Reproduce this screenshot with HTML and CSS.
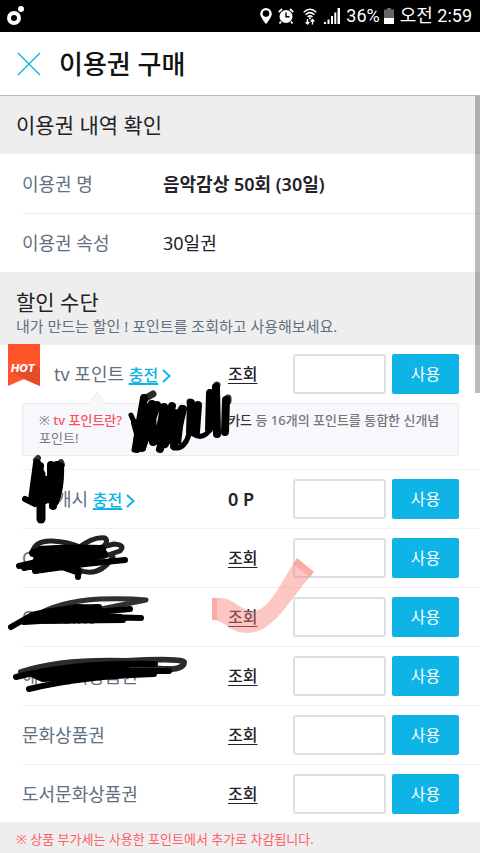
FILE: index.html
```html
<!DOCTYPE html>
<html lang="ko">
<head>
<meta charset="utf-8">
<meta name="viewport" content="width=device-width, initial-scale=1">
<title>이용권 구매</title>
<link rel="stylesheet" href="styles.css">
</head>
<body>
<div class="app">
  <div class="status">
    <svg class="status-logo" width="18" height="20" viewBox="0 0 18 20"><circle cx="7" cy="12" r="5" fill="none" stroke="#fff" stroke-width="4"/><circle cx="14" cy="3" r="3" fill="#fff"/></svg>
    <svg width="12" height="16" viewBox="0 0 12 16"><path fill="#fff" fill-rule="evenodd" d="M6 0a5.800 5.800 0 0 0-5.800 5.800C.2 9.500 6 16 6 16s5.800-6.500 5.800-10.200A5.800 5.800 0 0 0 6 0zm0 2.300a3.300 3.300 0 1 1 0 6.600 3.300 3.300 0 0 1 0-6.600z"/></svg>
    <svg class="alarm" width="16" height="16" viewBox="0 0 16 16"><circle cx="8" cy="8.500" r="6.500" fill="#fff"/><path d="M.8 4.200 4 1M15.200 4.200 12 1M3 13.500 1.500 15.500M13 13.500l1.500 2" stroke="#fff" stroke-width="1.800"/><path d="M8 4.500v4.300h3.500" fill="none" stroke="#000" stroke-width="1.400"/></svg>
    <svg class="wifi" width="14" height="17" viewBox="0 0 14 17"><path d="M.7 4.200Q7-1.800 13.300 4.200M2.600 6.600Q7 2.600 11.400 6.600M4.500 9Q7 6.800 9.500 9" fill="none" stroke="#fff" stroke-width="1.500"/><circle cx="7" cy="10.300" r="1.100" fill="#fff"/><path d="M4.500 11v5M2.700 14l1.800 2 1.800-2M9.500 16.500v-5M7.700 13.500l1.800-2 1.800 2" fill="none" stroke="#fff" stroke-width="1.300"/></svg>
    <svg class="signal" width="16" height="16" viewBox="0 0 16 16"><path fill="#fff" d="M0 14h2v2H0zM3.500 11.500h2V16h-2zM7 8h2v8H7zM10.300 4.500h2V16h-2zM13.500 0H16v16h-2.500z"/></svg>
    <span class="percent">36%</span>
    <svg class="battery" width="10" height="16" viewBox="0 0 10 16"><path fill="#666" d="M3 0h4v1.500h3V10H0V1.500h3z"/><path fill="#fff" d="M0 10h10v6H0z"/></svg>
    <span class="time">오전 2:59</span>
  </div>

  <header class="topbar">
    <button class="close" type="button" aria-label="닫기"><svg width="24" height="24" viewBox="0 0 24 24"><path d="M1 1l22 22M23 1 1 23" stroke="#0fb4e7" stroke-width="1.400"/></svg></button>
    <h1>이용권 구매</h1>
  </header>

  <main>
    <h2 class="section">이용권 내역 확인</h2>
    <dl class="info">
      <div class="info-row"><dt>이용권 명</dt><dd class="strong">음악감상 50회 (30일)</dd></div>
      <div class="info-row"><dt>이용권 속성</dt><dd>30일권</dd></div>
    </dl>

    <div class="section discount">
      <h2>할인 수단</h2>
      <p>내가 만드는 할인 ! 포인트를 조회하고 사용해보세요.</p>
    </div>

    <div class="methods">
      <div class="group">
        <svg class="hot" width="34" height="44" viewBox="0 0 34 44"><path fill="#ff552b" d="M1 0h32v42l-16-7-16 7z"/><path fill="#e44b27" d="M28 20l5 5v17l-16-7-11-7z"/><text x="16" y="28" text-anchor="middle">HOT</text></svg>
        <div class="row">
          <label class="name indent" for="p1">tv 포인트 <a href="#charge">충전<svg width="9" height="14" viewBox="0 0 9 14"><path d="M1 1l6.500 6L1 13" fill="none" stroke="#0fb4e7" stroke-width="2"/></svg></a></label>
          <a class="check" href="#check">조회</a><input id="p1" type="text"><button class="use" type="button">사용</button>
        </div>
        <div class="tip">
          <svg class="arrow" width="16" height="13" viewBox="0 0 16 13"><path d="M0 13 8 1l8 12" fill="#f7f8fc" stroke="#e9ebf1"/></svg>
          ※ <b class="red">tv 포인트란?</b><span class="blank"></span><b class="dark">카드</b> <b>등 16개의 포인트를 통합한 신개념</b> 포인트!
        </div>
      </div>
      <div class="row">
        <label class="name hidden-start" for="p2">캐시 <a href="#charge">충전<svg width="9" height="14" viewBox="0 0 9 14"><path d="M1 1l6.500 6L1 13" fill="none" stroke="#0fb4e7" stroke-width="2"/></svg></a></label>
        <strong class="points">0 P</strong><input id="p2" type="text"><button class="use" type="button">사용</button>
      </div>
      <div class="row">
        <label class="name" for="p3">O</label>
        <a class="check" href="#check">조회</a><input id="p3" type="text"><button class="use" type="button">사용</button>
      </div>
      <div class="row">
        <label class="name split" for="p4"><span>O</span><span>Point</span></label>
        <a class="check" href="#check">조회</a><input id="p4" type="text"><button class="use" type="button">사용</button>
      </div>
      <div class="row">
        <label class="name" for="p5">해피머니상품권</label>
        <a class="check" href="#check">조회</a><input id="p5" type="text"><button class="use" type="button">사용</button>
      </div>
      <div class="row">
        <label class="name" for="p6">문화상품권</label>
        <a class="check" href="#check">조회</a><input id="p6" type="text"><button class="use" type="button">사용</button>
      </div>
      <div class="row">
        <label class="name" for="p7">도서문화상품권</label>
        <a class="check" href="#check">조회</a><input id="p7" type="text"><button class="use" type="button">사용</button>
      </div>
    </div>
    <p class="notice">※ 상품 부가세는 사용한 포인트에서 추가로 차감됩니다.</p>
  </main>
  <div class="scrollbar"></div>

  <svg class="ink" width="480" height="853" viewBox="0 0 480 853">
    <path d="M141 405l12-3-3 40-10-6zM161 408l24 2-4 34-14 0zM38 546l40-2 26 10-5 11-58 5-9-8zM30 620l38-17 22 2-5 7 37 2-1 8-90 2zM24 674l30-8 76-4 22 4-30 6-30 8-50 2z"/>
    <g fill="none" stroke="#000" stroke-linecap="round" stroke-linejoin="round">
      <path stroke="#2b2b2b" stroke-width="7" d="M146 398l7-4M212 400l5-15M228 398l0 3M190 402l1 6"/>
      <path stroke-width="5" d="M131 415l6 14M140 416l-6 34"/>
      <path stroke-width="8" d="M144 398l-6 35-1 16M157 405l-15 43M135 423l7 25M152 404l1 38M164 407l-6 34M172 406l-12 43M182 409l-17 35M183 409l-9 37"/>
      <path stroke-width="5" d="M174 448q11 1 15-14M193 434q9 6 16-3"/>
      <path stroke-width="8" d="M191 403l-1 29M198 405l-2 27M210 393l-1 36M216 387l1 47M226 400l-1 32"/>
      <path stroke="#303030" stroke-width="6" d="M36 460l2-2M61 462l1 3"/>
      <path stroke-width="8" d="M37 463l-5 37M40 466l-4 34M51 465l0 35M57 465l-4 41M60 466q1 19-5 36M46 480l-1 20"/>
      <path stroke-width="9" d="M41 474l0 45"/>
      <path stroke-width="6" d="M25 499l10 5"/>
      <path stroke="#222" stroke-width="5" d="M32 553q3-13 20-12 17 1 28 6M78 548q16-12 27-10 6 5-10 15M91 550l23-6q12 1 6 7l-21 7M79 570q20 8 34-13"/>
      <path stroke-width="8" d="M33 553q22-6 69-4M38 562l66-8M37 569l50-9"/>
      <path stroke-width="6" d="M19 566l22-5M24 568l21-5M35 571l50-7 40-4M78 570v7M56 565l23 8"/>
      <path stroke="#303030" stroke-width="5" d="M32 618q25-17 68-19 27-1 46 1l-45 9"/>
      <path stroke-width="6" d="M11 627l21-12q33-8 67-8M28 618l102-9M24 622l81-5 36 1M30 621l93-1"/>
      <path stroke="#2b2b2b" stroke-width="6" d="M21 672q40-13 105-11 53-3 58 1 0 8-20 7l-32-2"/>
      <path stroke-width="6" d="M16 677q60-15 139-13M45 677l56-6 68 0M29 689q54-13 125-15"/>
    </g>
    <path fill="#f8827a" fill-opacity=".45" d="M212 598h8c14 0 21 13 33 13 15 0 23-20 44-53l17 14c-23 25-40 61-66 61-20 0-22-13-36-13z"/>
    <path fill="#f8827a" fill-opacity=".4" d="M212 598h5v22h-5zM297 558l17 14-4 5-17-13z"/>
  </svg>
</div>
</body>
</html>
```
FILE: styles.css
```css
* { box-sizing: border-box; }
body {
  margin: 0;
  background: #fff;
  color: #222228;
  font: 18px/26px "Noto Sans", "Noto Sans CJK KR", sans-serif;
}
h1, h2, p, dl, dd { margin: 0; font-weight: 400; }
button, input { font: inherit; }
.app { position: relative; overflow: hidden; }

.status {
  display: flex;
  align-items: center;
  height: 32px;
  padding: 0 8px 0 7px;
  background: #000;
  color: #fff;
  font-family: Roboto, "Noto Sans CJK KR", sans-serif;
}
.status-logo { margin-right: auto; }
.alarm { margin-left: 6px; }
.wifi { margin-left: 9px; }
.signal { margin-left: 7px; }
.percent { margin-left: 6px; }
.battery { margin: 0 6px 0 4px; }

.topbar {
  display: flex;
  align-items: center;
  gap: 18px;
  height: 64px;
  padding-left: 17px;
  border-bottom: 1px solid #b4bac2;
}
.close { display: flex; padding: 0; border: 0; background: none; }
.topbar h1 { font-size: 26px; line-height: 36px; font-weight: 500; color: #111; }

.section { padding: 14px 16px; background: #eee; font-size: 21px; line-height: 30px; }
.discount { padding: 16px 16px 9px; }
.discount h2 { font-size: 21px; line-height: 28px; }
.discount p { font-size: 15px; line-height: 20px; color: #607080; }

.info { padding-left: 22px; }
.info-row { display: flex; align-items: center; height: 59px; }
.info-row + .info-row { border-top: 1px solid #e8edf4; }
.info dt { width: 141px; color: #607080; }
.strong { font-weight: 600; }

.methods { padding-left: 22px; }
.group { position: relative; padding-bottom: 13px; }
.row {
  display: grid;
  grid-template-columns: 200px 1fr 93px 67px;
  align-items: center;
  column-gap: 6px;
  height: 59px;
  padding-right: 21px;
}
.group, .methods > .row { border-bottom: 1px solid #edf0f4; }
.methods > .row:last-child { height: 57px; border-bottom: 0; }
.group .row { height: 58px; }
.name { color: #607080; white-space: nowrap; }
.name a { color: #0fb4e7; font-size: 16px; font-weight: 500; text-decoration-thickness: 2px; text-underline-offset: 2px; }
.name svg { margin-left: 4px; vertical-align: -2px; }
.indent { padding-left: 32px; }
.hidden-start { padding-left: 33px; }
.split { display: flex; gap: 14px; }
.check { color: #222228; font-size: 16px; font-weight: 500; text-underline-offset: 3px; }
.points { font-weight: 600; }
.row input {
  width: 100%;
  height: 40px;
  border: 2px solid #dce0e4;
  border-radius: 3px;
  background: #fff;
}
.use {
  height: 40px;
  padding: 0;
  border: 0;
  border-radius: 2px;
  background: #0fb4e7;
  color: #fff;
  font-size: 16px;
}
.hot { position: absolute; left: -15px; top: -1px; }
.hot text { fill: #fff; font: italic 800 11px Inter, "Open Sans", sans-serif; }

.tip {
  position: relative;
  margin-right: 21px;
  padding: 7px 16px 8px;
  border: 1px solid #e9ebf1;
  border-radius: 2px;
  background: #f7f8fc;
  color: #777;
  font-size: 13px;
  line-height: 18px;
}
.tip b { font-weight: 500; }
.tip .red { color: #ff4f5e; }
.tip .dark { color: #333; }
.blank { display: inline-block; width: 106px; }
.arrow { position: absolute; left: 66px; top: -13px; }

.notice { padding: 8px 16px; background: #eee; color: #ff5d68; font-size: 13px; line-height: 18px; }

.scrollbar { position: absolute; right: 0; top: 96px; width: 5px; height: 297px; background: #0004; }
.ink { position: absolute; left: 0; top: 0; pointer-events: none; }
```
